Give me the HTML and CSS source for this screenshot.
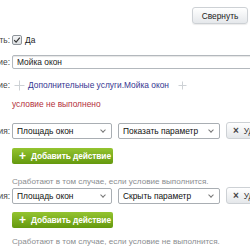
FILE: index.html
```html
<!DOCTYPE html>
<html>
<head>
<meta charset="utf-8">
<link rel="stylesheet" href="styles.css">
</head>
<body>
<div class="page">
  <div class="toolbar">
    <button class="btn-collapse">Свернуть</button>
  </div>
  <div class="form">
    <div class="row row-active">
      <div class="label">Активность:</div>
      <div class="field">
        <label class="check"><span class="box"><svg width="8" height="8" viewBox="0 0 8 8"><path d="M1.2 4.1 L3.1 6.1 L6.8 1.6" fill="none" stroke="#333" stroke-width="1.2"/></svg></span>Да</label>
      </div>
    </div>
    <div class="row row-name">
      <div class="label">Название:</div>
      <div class="field">
        <div class="input">Мойка окон</div>
      </div>
    </div>
    <div class="row row-cond">
      <div class="label">Условие:</div>
      <div class="field cond">
        <svg class="plus" width="11" height="11" viewBox="0 0 11 11"><path d="M5.5 0.5 V10.5 M0.5 5.5 H10.5" stroke="#cdd1d5" stroke-width="1"/></svg>
        <a class="link">Дополнительные услуги.Мойка окон</a>
        <svg class="plus" width="9" height="9" viewBox="0 0 9 9"><path d="M4.5 0.5 V8.5 M0.5 4.5 H8.5" stroke="#cdd1d5" stroke-width="1"/></svg>
      </div>
    </div>
    <div class="row row-err">
      <div class="label"></div>
      <div class="field err">условие не выполнено</div>
    </div>
    <div class="row row-act">
      <div class="label">Действия:</div>
      <div class="field">
        <div class="controls">
          <div class="select s1">Площадь окон<span class="arrow"></span></div>
          <div class="select s2">Показать параметр<span class="arrow"></span></div>
          <button class="btn-del"><span class="x">×</span>Удалить</button>
        </div>
        <button class="btn-add"><span class="p">+</span>Добавить действие</button>
        <div class="hint">Сработают в том случае, если условие выполнится.</div>
      </div>
    </div>
    <div class="row row-act2">
      <div class="label">Действия:</div>
      <div class="field">
        <div class="controls">
          <div class="select s1">Площадь окон<span class="arrow"></span></div>
          <div class="select s2">Скрыть параметр<span class="arrow"></span></div>
          <button class="btn-del"><span class="x">×</span>Удалить</button>
        </div>
        <button class="btn-add"><span class="p">+</span>Добавить действие</button>
        <div class="hint">Сработают в том случае, если условие не выполнится.</div>
      </div>
    </div>
  </div>
</div>
</body>
</html>
```
FILE: styles.css
```css
html, body {
  margin: 0;
  padding: 0;
  background: #fff;
  overflow: hidden;
}
body {
  font-family: "Liberation Sans", Arial, sans-serif;
  font-size: 8.4px;
  color: #333;
  width: 250px;
  height: 250px;
}
.page {
  width: 250px;
  height: 250px;
  overflow: hidden;
}
.toolbar {
  display: flex;
  justify-content: flex-end;
  padding: 7px 2px 0 0;
  height: 17px;
}
.btn-collapse {
  width: 56px;
  height: 17px;
  border: 1px solid #cdd1d5;
  border-radius: 3px;
  background: linear-gradient(#ffffff, #e5e8eb);
  font-family: inherit;
  font-size: 8.4px;
  color: #222;
  padding: 0;
  box-shadow: 0 1px 1px rgba(0,0,0,0.08);
}
.form {
  margin-left: -90px;
  margin-top: 10px;
}
.row {
  display: grid;
  grid-template-columns: 100px 1fr;
  column-gap: 2px;
}
.label {
  text-align: right;
  color: #444;
  line-height: 12px;
  white-space: nowrap;
}
.field {
  min-width: 0;
}
.row-active { height: 12px; }
.check {
  display: flex;
  align-items: center;
  gap: 3px;
  height: 12px;
  color: #222;
}
.box {
  width: 8px;
  height: 8px;
  border: 1px solid #8e949a;
  border-radius: 2px;
  background: linear-gradient(#f4f5f6, #dde0e3);
  display: flex;
}
.row-name { margin-top: 9px; }
.row-name .label { line-height: 14px; }
.input {
  width: 260px;
  height: 14px;
  border: 1px solid #b3b8bd;
  border-radius: 2px;
  padding: 0 4px;
  line-height: 12px;
  color: #222;
  box-shadow: inset 0 1px 1px rgba(0,0,0,0.1);
  white-space: nowrap;
  box-sizing: border-box;
}
.row-cond { margin-top: 10px; }
.cond {
  display: flex;
  align-items: center;
  height: 12px;
  white-space: nowrap;
}
.cond .plus { margin-left: 2px; margin-right: 3px; flex: none; }
.cond .link + .plus { margin-left: 9px; }
.link {
  color: #363691;
  text-decoration: none;
}
.row-err { margin-top: 7px; }
.err {
  color: #b3303c;
  line-height: 12px;
}
.row-act { margin-top: 13px; }
.row-act2 { margin-top: 1px; }
.row-act .label, .row-act2 .label { line-height: 16px; }
.controls {
  display: flex;
  gap: 6px;
  white-space: nowrap;
}
.select {
  position: relative;
  box-sizing: border-box;
  height: 16px;
  line-height: 14px;
  border: 1px solid #a9aeb3;
  border-radius: 2px;
  padding: 0 4px;
  color: #111;
  flex: none;
}
.s1 { width: 100px; }
.s2 { width: 102px; }
.arrow {
  position: absolute;
  right: 6px;
  top: 4px;
  width: 3px;
  height: 3px;
  border-right: 1px solid #777;
  border-bottom: 1px solid #777;
  transform: rotate(45deg);
}
.btn-del {
  flex: none;
  height: 17px;
  margin-top: -1px;
  padding: 0 6px;
  border: 1px solid #cdd1d5;
  border-radius: 3px;
  background: linear-gradient(#ffffff, #e4e7ea);
  font-family: inherit;
  font-size: 8.4px;
  color: #333;
  white-space: nowrap;
}
.btn-del .x { font-weight: 700; font-size: 10px; margin-right: 5px; color: #444; }
.btn-add {
  display: flex;
  align-items: center;
  margin-top: 9px;
  width: 101px;
  height: 16px;
  border: none;
  border-radius: 2px;
  background: linear-gradient(#94c430, #64990e);
  color: #fff;
  font-family: inherit;
  font-size: 8.4px;
  font-weight: 700;
  letter-spacing: -0.1px;
  padding: 0 0 0 7px;
  white-space: nowrap;
  overflow: hidden;
}
.btn-add .p {
  font-size: 12px;
  font-weight: 700;
  margin-right: 5px;
  line-height: 12px;
}
.hint {
  margin-top: 13px;
  font-size: 8.1px;
  color: #8a8d90;
  line-height: 10px;
  white-space: nowrap;
}
.row-act2 .btn-add { margin-top: 8px; }
.row-act2 .hint { margin-top: 9px; }
```
